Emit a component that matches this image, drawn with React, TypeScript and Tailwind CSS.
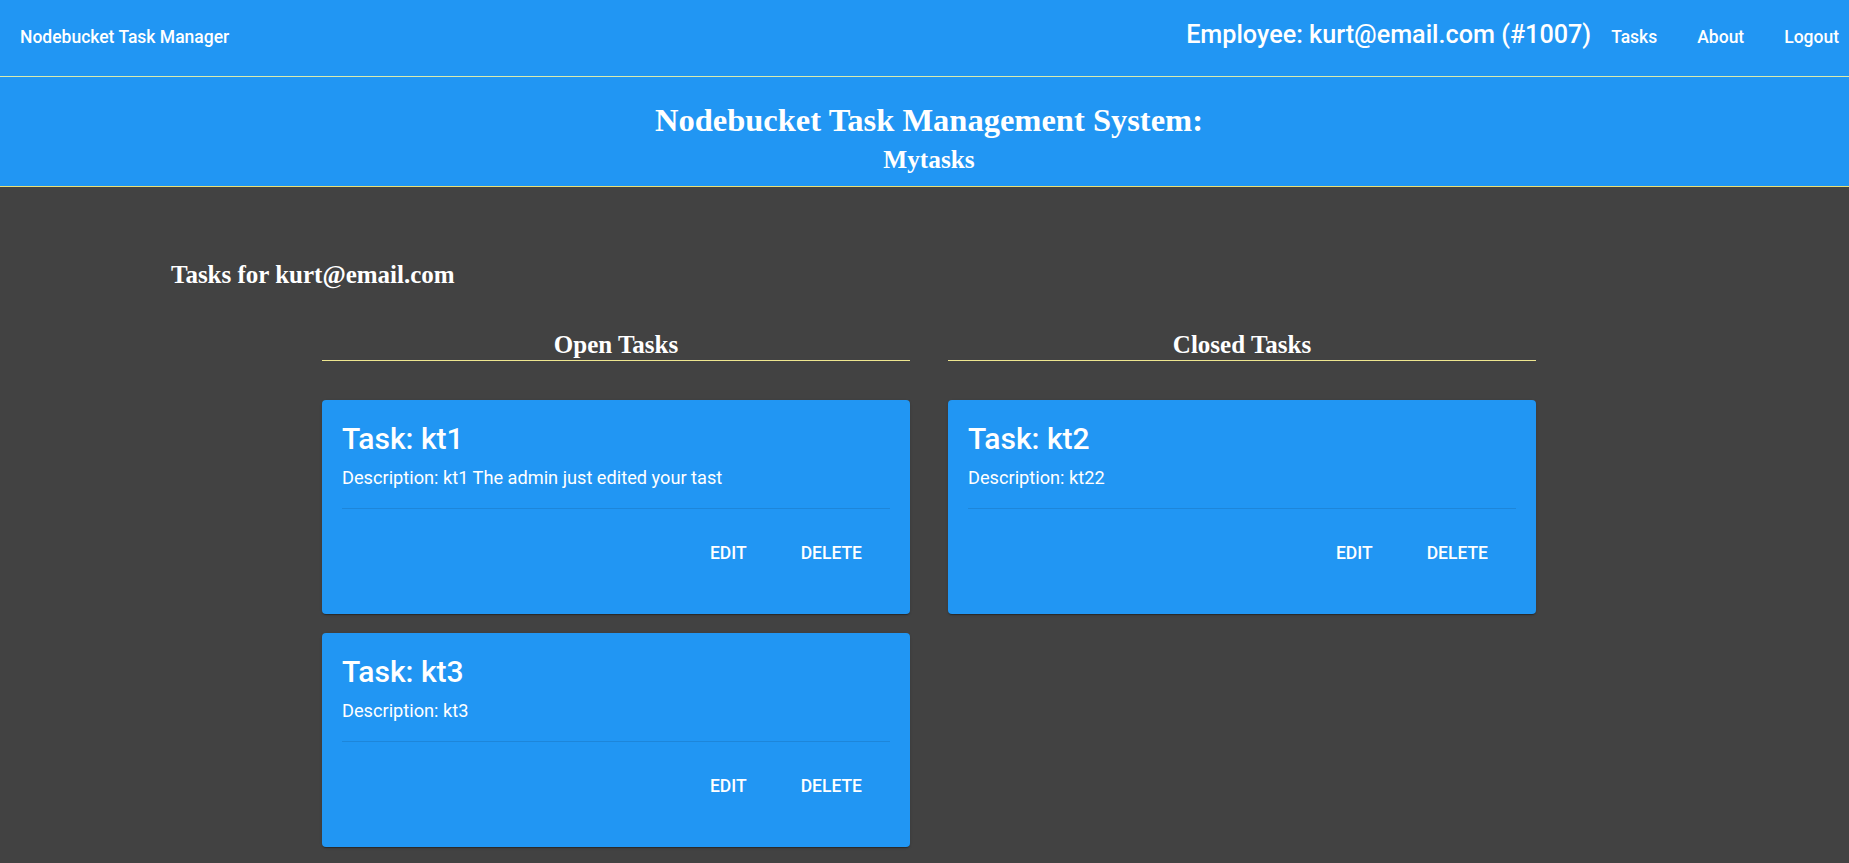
import React from 'react'

type Task = { id: string; text: string; description: string }

const openTasks: Task[] = [
  { id: '1', text: 'kt1', description: 'kt1 The admin just edited your tast' },
  { id: '3', text: 'kt3', description: 'kt3' },
]

const closedTasks: Task[] = [{ id: '2', text: 'kt2', description: 'kt22' }]

const roboto = { fontFamily: 'Roboto, "Liberation Sans", sans-serif' }

function TaskCard({ task }: { task: Task }) {
  return (
    <div className="rounded-[4px] bg-[#2196f3] px-5 pt-[23px] pb-[43px] text-white shadow-[0_2px_1px_-1px_rgba(0,0,0,0.2),0_1px_1px_0_rgba(0,0,0,0.14),0_1px_3px_0_rgba(0,0,0,0.12)]">
      <h2 className="text-[30px] font-medium leading-[32px]">Task: {task.text}</h2>
      <p className="mt-[11px] text-[18.2px] leading-[24px]">
        Description: {task.description}
      </p>
      <div className="mt-[18px] border-t border-black/10" />
      <div className="mt-[26px] flex justify-end gap-[22px] pr-[12px]">
        <button className="h-9 min-w-16 px-4 text-[17.5px] font-medium leading-[36px]">
          EDIT
        </button>
        <button className="h-9 min-w-16 px-4 text-[17.5px] font-medium leading-[36px]">
          DELETE
        </button>
      </div>
    </div>
  )
}

function TaskColumn({ title, tasks }: { title: string; tasks: Task[] }) {
  return (
    <div className="w-[588px]">
      <h3 className="border-b border-[#eee68f] text-center text-[25px] font-bold leading-[30px] text-white">
        {title}
      </h3>
      <div className="mt-[39px] flex flex-col gap-[19px]" style={roboto}>
        {tasks.map((t) => (
          <TaskCard key={t.id} task={t} />
        ))}
      </div>
    </div>
  )
}

export default function App() {
  return (
    <div
      className="min-h-[863px] bg-[#424242]"
      style={{ fontFamily: '"Liberation Serif", "Times New Roman", serif' }}
    >
      {/* Toolbar */}
      <div
        className="flex h-[77px] items-start border-b border-[#d8ecb0] bg-[#2196f3] pr-[10px] pl-[20px] text-white"
        style={roboto}
      >
        <span className="mt-[27px] text-[17.5px] font-medium leading-[20px]">
          Nodebucket Task Manager
        </span>
        <div className="ml-auto flex items-start">
          <span className="mt-[20px] text-[25.2px] font-medium leading-[30px]">
            Employee: kurt@email.com (#1007)
          </span>
          <nav className="ml-[20px] mt-[27px] flex gap-[40px] text-[17.5px] font-medium leading-[20px]">
            <a>Tasks</a>
            <a>About</a>
            <a>Logout</a>
          </nav>
        </div>
      </div>

      {/* Page header */}
      <div className="border-b border-[#e8e07a] bg-[#2196f3] pt-[25px] pb-[12px] pl-[9px] text-center text-white">
        <h1 className="text-[32.5px] font-bold leading-[37px]">
          Nodebucket Task Management System:
        </h1>
        <h2 className="mt-[6px] text-[25.3px] font-bold leading-[29px]">Mytasks</h2>
      </div>

      {/* Content */}
      <div className="pt-[74px] pb-[16px]">
        <h2 className="pl-[171px] text-[25px] font-bold leading-[28px] text-white">
          Tasks for kurt@email.com
        </h2>
        <div className="mt-[41px] flex justify-center gap-[38px] pl-[9px]">
          <TaskColumn title="Open Tasks" tasks={openTasks} />
          <TaskColumn title="Closed Tasks" tasks={closedTasks} />
        </div>
      </div>
    </div>
  )
}
